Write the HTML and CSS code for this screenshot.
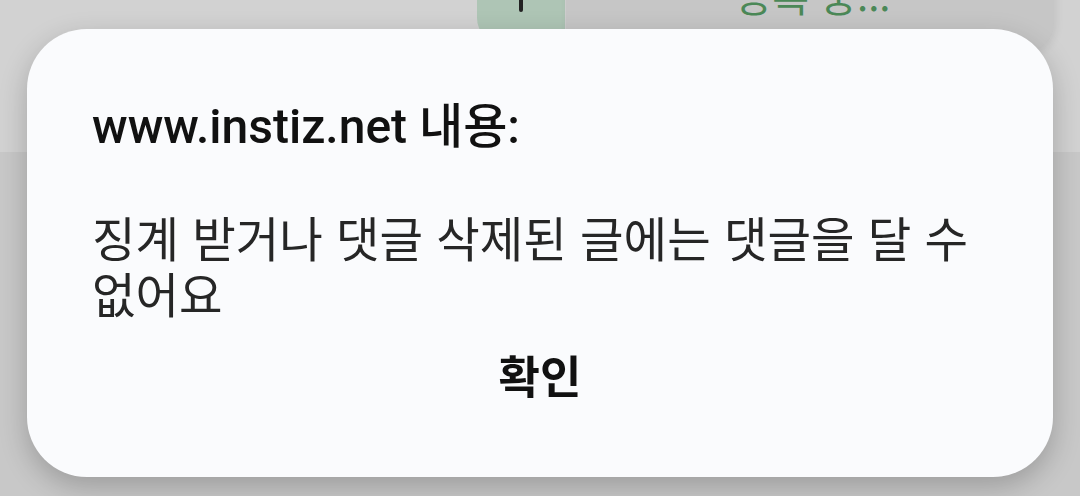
FILE: index.html
```html
<!DOCTYPE html>
<html lang="ko">
<head>
<meta charset="utf-8">
<title>instiz</title>
<link rel="stylesheet" href="styles.css">
</head>
<body>
<div class="page">
  <header class="topbar">
    <div class="actions">
      <div class="add-btn"><span class="add-bar"></span></div>
      <div class="status-btn"><span class="status-text">등록 중...</span></div>
    </div>
  </header>
  <main class="content"></main>
</div>
<div class="scrim">
  <div class="dialog" role="alertdialog">
    <h2 class="dialog-title">www.instiz.net 내용:</h2>
    <p class="dialog-message">징계 받거나 댓글 삭제된 글에는 댓글을 달 수 없어요</p>
    <div class="dialog-actions">
      <button class="dialog-ok">확인</button>
    </div>
  </div>
</div>
</body>
</html>
```
FILE: styles.css
```css
* { box-sizing: border-box; }
html, body {
  margin: 0;
  padding: 0;
  width: 1080px;
  height: 496px;
  overflow: hidden;
  font-family: Roboto, "Noto Sans CJK KR", sans-serif;
}
.page {
  display: flex;
  flex-direction: column;
  height: 496px;
  background: #c8c8c8;
}
.topbar {
  height: 152px;
  background: #d2d2d2;
  display: flex;
  justify-content: flex-end;
  padding-right: 26px;
}
.actions {
  display: flex;
  margin-top: -40px;
  height: 92px;
}
.add-btn {
  width: 88px;
  height: 84px;
  background: #aec5b5;
  border-radius: 0 0 0 26px;
  display: flex;
  justify-content: center;
}
.add-bar {
  width: 4px;
  height: 52px;
  background: #222;
  border-radius: 2px;
}
.status-btn {
  width: 488px;
  margin-left: 1px;
  height: 92px;
  background: #c6c6c6;
  border-radius: 0 0 30px 0;
  box-shadow: 2px 3px 8px rgba(0,0,0,0.08);
  display: flex;
  justify-content: center;
  align-items: flex-end;
  padding-bottom: 37px;
  padding-left: 6px;
}
.status-text {
  font-family: "Noto Sans CJK KR", sans-serif;
  font-size: 40px;
  line-height: 40px;
  color: #4b8857;
}
.content { flex: 1; }
.scrim {
  position: fixed;
  inset: 0;
}
.dialog {
  position: absolute;
  left: 27px;
  top: 29px;
  width: 1026px;
  height: 448px;
  background: #fafbfd;
  border-radius: 60px;
  box-shadow: 0 10px 28px rgba(0,0,0,0.22);
  padding: 70px 65px 0 65px;
  display: flex;
  flex-direction: column;
}
.dialog-title {
  margin: 0;
  font-size: 48px;
  line-height: 56px;
  font-weight: 500;
  color: #111;
}
.dialog-message {
  margin: 54px 0 0 0;
  font-family: "Noto Sans CJK KR", sans-serif;
  font-size: 47.3px;
  line-height: 56px;
  font-weight: 400;
  color: #262626;
  word-break: keep-all;
}
.dialog-actions {
  display: flex;
  justify-content: center;
  margin-top: 26px;
}
.dialog-ok {
  border: 0;
  background: none;
  padding: 0;
  font-family: "Noto Sans CJK KR", sans-serif;
  font-size: 45px;
  line-height: 56px;
  font-weight: 700;
  color: #111;
}
```
